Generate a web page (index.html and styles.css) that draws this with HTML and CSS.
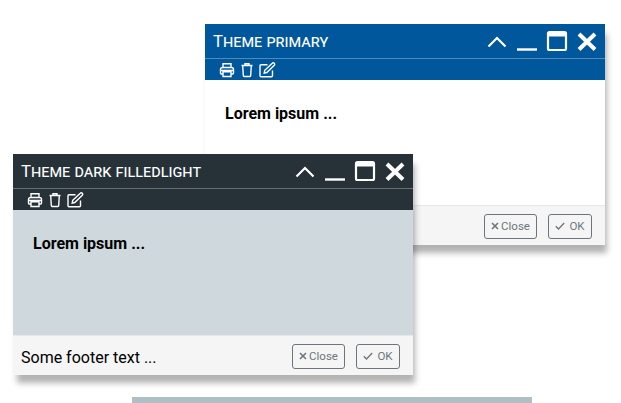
FILE: index.html
```html
<!DOCTYPE html>
<html>

<head>
	<title>Panels</title>
	<link rel="stylesheet" href="styles.css">
</head>

<body>
	<div class="panel panel-primary">
		<div class="panel-header">
			<div class="titlebar">
				<div class="title">Theme primary</div>
				<div class="controls">
					<svg width="24" height="24" viewBox="0 0 24 24"><path d="M3.5 17.5 12 9l8.5 8.5"/></svg>
					<svg width="24" height="24" viewBox="0 0 24 24"><path class="thick" d="M2 20.5h20"/></svg>
					<svg width="24" height="24" viewBox="0 0 24 24"><rect x="3" y="3" width="18" height="18" rx="1.5"/><path class="heavy" d="M3 5.5h18"/></svg>
					<svg width="24" height="24" viewBox="0 0 24 24"><path class="heavy" d="M4 5l16 15.5M20 5 4 20.5"/></svg>
				</div>
			</div>
			<div class="toolbar">
				<svg class="tool" width="16" height="16" viewBox="0 0 16 16"><path d="M4 5.5V1.700h8v3.800M4 12H2.500a1 1 0 0 1-1-1V7.500a2 2 0 0 1 2-2h9a2 2 0 0 1 2 2V11a1 1 0 0 1-1 1H12M4 9.700h8v4.800H4zM1.500 8.500h13"/></svg>
				<svg class="tool" width="12" height="16" viewBox="0 0 12 16"><path d="M.5 3.500h11M4 3.500V1.700h4v1.800M1.700 3.500l.6 10a1 1 0 0 0 1 1h5.400a1 1 0 0 0 1-1l.6-10"/></svg>
				<svg class="tool" width="17" height="16" viewBox="0 0 17 16"><path d="M8.500 2.800H2a1 1 0 0 0-1 1v10a1 1 0 0 0 1 1h10.500a1 1 0 0 0 1-1V8.500M5.800 8.200l7.500-7a1.200 1.200 0 0 1 2 2l-7.500 7.300-2.600.5z"/></svg>
			</div>
		</div>
		<div class="panel-content">Lorem ipsum ...</div>
		<div class="panel-footer">
			<span class="footer-text"></span>
			<button class="btn btn-close"><svg width="8" height="8" viewBox="0 0 8 8"><path d="M1 1l6 6M7 1 1 7"/></svg>Close</button>
			<button class="btn btn-ok"><svg width="10" height="8" viewBox="0 0 10 8"><path d="M.8 4.200 3.500 7 9.200 1"/></svg>OK</button>
		</div>
	</div>

	<div class="panel panel-dark">
		<div class="panel-header">
			<div class="titlebar">
				<div class="title">Theme dark filledlight</div>
				<div class="controls">
					<svg width="24" height="24" viewBox="0 0 24 24"><path d="M3.5 17.5 12 9l8.5 8.5"/></svg>
					<svg width="24" height="24" viewBox="0 0 24 24"><path class="thick" d="M2 20.5h20"/></svg>
					<svg width="24" height="24" viewBox="0 0 24 24"><rect x="3" y="3" width="18" height="18" rx="1.5"/><path class="heavy" d="M3 5.5h18"/></svg>
					<svg width="24" height="24" viewBox="0 0 24 24"><path class="heavy" d="M4 5l16 15.5M20 5 4 20.5"/></svg>
				</div>
			</div>
			<div class="toolbar">
				<svg class="tool" width="16" height="16" viewBox="0 0 16 16"><path d="M4 5.5V1.700h8v3.800M4 12H2.500a1 1 0 0 1-1-1V7.500a2 2 0 0 1 2-2h9a2 2 0 0 1 2 2V11a1 1 0 0 1-1 1H12M4 9.700h8v4.800H4zM1.500 8.500h13"/></svg>
				<svg class="tool" width="12" height="16" viewBox="0 0 12 16"><path d="M.5 3.500h11M4 3.500V1.700h4v1.800M1.700 3.500l.6 10a1 1 0 0 0 1 1h5.400a1 1 0 0 0 1-1l.6-10"/></svg>
				<svg class="tool" width="17" height="16" viewBox="0 0 17 16"><path d="M8.500 2.800H2a1 1 0 0 0-1 1v10a1 1 0 0 0 1 1h10.500a1 1 0 0 0 1-1V8.500M5.800 8.200l7.500-7a1.200 1.200 0 0 1 2 2l-7.500 7.300-2.600.5z"/></svg>
			</div>
		</div>
		<div class="panel-content">Lorem ipsum ...</div>
		<div class="panel-footer">
			<span class="footer-text">Some footer text ...</span>
			<button class="btn btn-close"><svg width="8" height="8" viewBox="0 0 8 8"><path d="M1 1l6 6M7 1 1 7"/></svg>Close</button>
			<button class="btn btn-ok"><svg width="10" height="8" viewBox="0 0 10 8"><path d="M.8 4.200 3.500 7 9.200 1"/></svg>OK</button>
		</div>
	</div>

	<div class="panel panel-cut"></div>
</body>

</html>
```

FILE: styles.css
```css
html,
body {
	margin: 0;
	height: 100%;
	overflow: hidden;
	background: #fff;
}

body {
	font-family: Roboto, sans-serif;
	color: #000;
}

.panel {
	position: absolute;
	width: 400px;
	box-shadow: 3px 9px 6px -1px rgba(0, 0, 0, 0.3);
}

.panel-primary {
	left: 205px;
	top: 24px;
}

.panel-dark {
	left: 13px;
	top: 154px;
}

.panel-cut {
	left: 132px;
	top: 397px;
	height: 6px;
	background: #b0bec5;
	box-shadow: none;
}

.panel-primary .panel-header {
	background: #01579b;
}

.panel-dark .panel-header {
	background: #263238;
}

.titlebar {
	display: flex;
	align-items: center;
	justify-content: space-between;
	height: 34px;
	padding: 0 6px 0 8px;
	border-bottom: 1px solid rgba(255, 255, 255, 0.3);
}

.title {
	color: #fff;
	font-size: 16.8px;
	font-variant: small-caps;
	line-height: 34px;
}

.controls {
	display: flex;
	gap: 6px;
}

.controls svg {
	display: block;
	fill: none;
	stroke: #fff;
	stroke-width: 2.2;
}

.controls .thick {
	stroke-width: 2.4;
}

.controls .heavy {
	stroke-width: 4;
}

.toolbar {
	display: flex;
	align-items: center;
	gap: 6px;
	height: 21px;
	padding: 1px 0 0 14px;
	box-sizing: border-box;
}

.tool {
	display: block;
	fill: none;
	stroke: #fff;
	stroke-width: 1.4;
}

.panel-content {
	height: 125px;
	box-sizing: border-box;
	padding: 24px 20px;
	font-size: 16px;
	font-weight: 700;
	line-height: 19px;
	background: #fff;
}

.panel-dark .panel-content {
	background: #cfd8dc;
}

.panel-footer {
	display: flex;
	align-items: center;
	height: 40px;
	box-sizing: border-box;
	padding: 1px 13px 0 8px;
	gap: 11px;
	background: #f5f5f5;
	border-top: 1px solid #e8e8e8;
}

.footer-text {
	flex: 1;
	padding-top: 2px;
	font-size: 16px;
}

.btn {
	display: flex;
	align-items: center;
	justify-content: center;
	box-sizing: border-box;
	height: 25px;
	padding: 0;
	font-family: Roboto, sans-serif;
	font-size: 11.5px;
	color: #6c757d;
	background: #f5f5f5;
	border: 1px solid #6c757d;
	border-radius: 3px;
}

.btn svg {
	fill: none;
	stroke: #6c757d;
}

.btn-close {
	gap: 2px;
	width: 53px;
}

.btn-close svg {
	stroke-width: 1.6;
}

.btn-ok {
	gap: 4px;
	width: 44px;
}

.btn-ok svg {
	stroke-width: 1.3;
}
```
